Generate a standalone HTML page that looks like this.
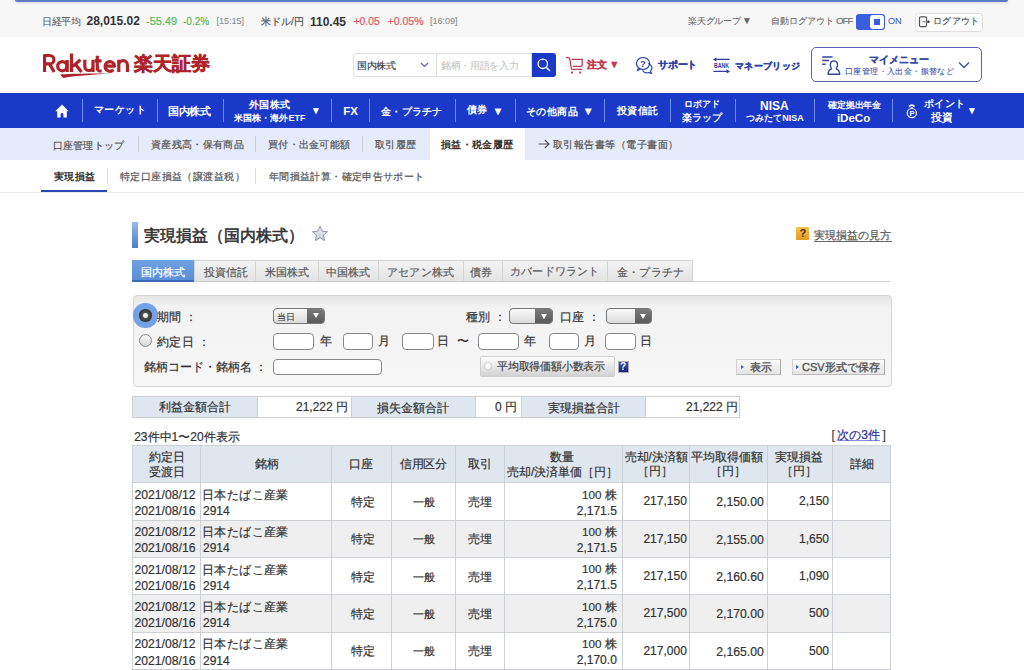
<!DOCTYPE html>
<html><head><meta charset="utf-8">
<style>
*{box-sizing:border-box;margin:0;padding:0}
html,body{width:1024px;height:670px;overflow:hidden;background:#fff}
body{font-family:"Liberation Sans",sans-serif;color:#333;position:relative}
.a{position:absolute;white-space:nowrap}
.a[id]{-webkit-text-stroke:0.2px currentColor}

</style></head><body>
<div class="raw">
<!-- ticker bar -->
<div class="a" style="left:0;top:0;width:1024px;height:37px;background:#f7f7f8"></div>
<div class="a" style="left:15px;top:0;width:993px;height:2px;background:#5b7bc2;border-radius:0 0 3px 3px;box-shadow:0 1px 3px rgba(0,0,0,.15)"></div>
<div class="a" style="left:856px;top:13.5px;width:29px;height:16px;background:#3a5ee0;border-radius:3px"></div>
<div class="a" style="left:870px;top:14.5px;width:14px;height:14px;background:#fff;border-radius:3px"></div>
<div class="a" style="left:874px;top:19px;width:6px;height:6px;background:#3a5ee0"></div>
<div class="a" style="left:915px;top:12.5px;width:67.5px;height:19px;background:#fdfdfd;border:1px solid #dedede;border-radius:3.5px"></div>
<svg class="a" style="left:912px;top:10px" width="28" height="24" viewBox="0 0 28 24"><rect x="7.5" y="6.8" width="7" height="9.8" rx="1" fill="none" stroke="#555" stroke-width="1.2"/><path d="M10.4 11.7H16" stroke="#999" stroke-width="1.1"/><circle cx="16.4" cy="11.7" r="1.25" fill="#333"/></svg>

<!-- header -->
<svg class="a" style="left:43px;top:53px" width="90" height="28" viewBox="0 0 90 28">
<g fill="none" stroke="#ae2329" stroke-width="3.2" stroke-linecap="butt" stroke-linejoin="round">
<path d="M1.5 19V2.5h5.2a4.2 4.2 0 0 1 0 8.4H1.5M6.5 10.9L11.2 19"/>
<circle cx="19.3" cy="13.2" r="4.6"/><path d="M24.2 7v12"/>
<path d="M28.5 0.5V19M37.4 6.8l-7.6 6.6M32.6 11.6L38.5 19"/>
<path d="M41.8 6.8v6.6a4.1 4.1 0 0 0 8.2 0V6.8M50 10v9"/>
<path d="M54.3 2.8v12.6a2.6 2.6 0 0 0 2.6 2.6h1.8M51.6 7.9h7"/>
<path d="M62.2 13.2H71.4A4.6 4.6 0 0 0 62.2 13.2A4.6 4.6 0 0 0 70.3 16.6"/>
<path d="M75.8 6.8V19M75.8 12a4.3 4.3 0 0 1 8.6 0v7"/>
</g>
<path d="M17.5 21.2C30 20.6 50 20.2 68.5 20.5C52 21.4 34 22.6 20.5 24.9C19 24 17.8 22.5 17.5 21.2z" fill="#ae2329"/>
</svg>
<div class="a" style="left:353px;top:53px;width:84px;height:24px;border:1px solid #ddd;border-radius:3px 0 0 3px;background:#fff"></div>
<svg class="a" style="left:420px;top:62px" width="9" height="6" viewBox="0 0 9 6"><path d="M1 1l3.5 3.5L8 1" fill="none" stroke="#5566aa" stroke-width="1.2"/></svg>
<div class="a" style="left:437px;top:53px;width:95px;height:24px;border:1px solid #ddd;border-left:none;background:#fff"></div>
<div class="a" style="left:532px;top:53px;width:24px;height:24px;background:#1a39c8;border-radius:0 3px 3px 0"></div>
<svg class="a" style="left:536px;top:57px" width="16" height="16" viewBox="0 0 16 16"><circle cx="6.8" cy="6.8" r="4.7" fill="none" stroke="#fff" stroke-width="1.3"/><path d="M10.3 10.3l3.6 3.6" stroke="#fff" stroke-width="1.4"/></svg>
<svg class="a" style="left:562px;top:52px" width="28" height="26" viewBox="0 0 28 26"><path d="M4.4 5.4C6.5 5.4 7.6 5.8 7.9 7.5L9.3 16.3C9.4 17 9.8 17.4 10.5 17.4H19.8M10.2 7.4H20.2V13C20.2 13.9 19.7 14.3 18.8 14.3H11.2" fill="none" stroke="#bb3d5c" stroke-width="1.35" stroke-linecap="round"/><rect x="9" y="19.5" width="2" height="2" rx="0.5" fill="#bb3d5c"/><rect x="17.2" y="19.5" width="2" height="2" rx="0.5" fill="#bb3d5c"/></svg>
<svg class="a" style="left:635px;top:56px" width="19" height="18" viewBox="0 0 19 18"><path d="M8 1.5a6.5 6 0 1 0 0.1 0zM3.5 11.5l-1 3 3.5-1.5" fill="#fff" stroke="#2d44a8" stroke-width="1.2"/><path d="M13 7.5a5 4.5 0 0 1 2.5 7.5l1 2.5-3-1a5 4.5 0 0 1-6-2" fill="none" stroke="#2d44a8" stroke-width="1.2"/><text x="8" y="10.8" font-size="9.5" font-weight="bold" text-anchor="middle" fill="#2d44a8" font-family="Liberation Sans">?</text></svg>
<svg class="a" style="left:712px;top:56px" width="19" height="19" viewBox="0 0 19 19"><path d="M3 3.4H17.7M1.4 15.4H16" fill="none" stroke="#2d3d9c" stroke-width="1.3"/><path d="M1 3.4L4.4 1.2V5.6z M18 15.4L14.6 13.2V17.6z" fill="#2d3d9c"/><text x="2" y="11.8" font-size="6.4" font-weight="bold" textLength="15" lengthAdjust="spacingAndGlyphs" fill="#2d3d9c" font-family="Liberation Sans">BANK</text></svg>
<div class="a" style="left:811px;top:47px;width:171px;height:35px;border:1.3px solid #5563b5;border-radius:5px;background:#fff"></div>
<svg class="a" style="left:816px;top:50px" width="30" height="30" viewBox="0 0 30 30"><path d="M6.2 6.9H16.6M6.2 10.5H13M6.2 14.3H9.6" stroke="#35449e" stroke-width="1.5"/><path d="M15.6 18.8C13.1 15.4 14.2 10.9 17.9 10.9C21.6 10.9 22.7 15.4 20.2 18.8C22.6 19.5 23.7 21.6 23.7 24.3H12.1C12.1 21.6 13.2 19.5 15.6 18.8Z" fill="none" stroke="#35449e" stroke-width="1.4" stroke-linejoin="round"/></svg>
<svg class="a" style="left:958px;top:61px" width="12" height="8" viewBox="0 0 12 8"><path d="M1 1.5l5 5 5-5" fill="none" stroke="#3a4ba8" stroke-width="1.3"/></svg>

<!-- nav -->
<div class="a" style="left:0;top:93px;width:1024px;height:35px;background:#1a39c8"></div>
<svg class="a" style="left:55px;top:104px" width="14" height="14" viewBox="0 0 14 14"><path d="M7 0.6L0.3 7.2h1.9v6.4h3.4V10.4a1.4 1.4 0 0 1 2.8 0v3.2h3.4V7.2h1.9z" fill="#fff"/></svg>
<div class="a" style="left:82px;top:99px;width:1px;height:23px;background:#6f8cf0"></div>
<div class="a" style="left:157px;top:99px;width:1px;height:23px;background:#6f8cf0"></div>
<div class="a" style="left:223px;top:99px;width:1px;height:23px;background:#6f8cf0"></div>
<div class="a" style="left:331px;top:99px;width:1px;height:23px;background:#6f8cf0"></div>
<div class="a" style="left:369px;top:99px;width:1px;height:23px;background:#6f8cf0"></div>
<div class="a" style="left:455px;top:99px;width:1px;height:23px;background:#6f8cf0"></div>
<div class="a" style="left:515px;top:99px;width:1px;height:23px;background:#6f8cf0"></div>
<div class="a" style="left:604px;top:99px;width:1px;height:23px;background:#6f8cf0"></div>
<div class="a" style="left:670px;top:99px;width:1px;height:23px;background:#6f8cf0"></div>
<div class="a" style="left:735px;top:99px;width:1px;height:23px;background:#6f8cf0"></div>
<div class="a" style="left:814px;top:99px;width:1px;height:23px;background:#6f8cf0"></div>
<div class="a" style="left:892px;top:99px;width:1px;height:23px;background:#6f8cf0"></div>
<svg class="a" style="left:905px;top:103px" width="14" height="17" viewBox="0 0 14 17"><path d="M4 3.6Q6.8 0.8 9.6 3.6" fill="none" stroke="#fff" stroke-width="1.7"/><path d="M5.6 4.6h2.4" stroke="#fff" stroke-width="0.8"/><circle cx="6.8" cy="10.1" r="4.6" fill="none" stroke="#fff" stroke-width="1.2"/><text x="6.9" y="12.9" font-size="7.5" font-weight="bold" text-anchor="middle" fill="#fff" font-family="Liberation Sans">P</text></svg>

<!-- subnav -->
<div class="a" style="left:0;top:128px;width:1024px;height:32px;background:#e6ebfb"></div>
<div class="a" style="left:430px;top:128px;width:95px;height:32px;background:#fff"></div>
<svg class="a" style="left:538px;top:139px" width="12" height="10" viewBox="0 0 12 10"><path d="M0.5 5H11M6.8 1l4.2 4-4.2 4" fill="none" stroke="#555" stroke-width="1.1"/></svg>
<div class="a" style="left:138px;top:136px;width:1px;height:16px;background:#ccc"></div>
<div class="a" style="left:255px;top:136px;width:1px;height:16px;background:#ccc"></div>
<div class="a" style="left:362px;top:136px;width:1px;height:16px;background:#ccc"></div>
<div class="a" style="left:41px;top:189.5px;width:66px;height:2.5px;background:#2b47b5"></div>
<div class="a" style="left:107px;top:168px;width:1px;height:16px;background:#ddd"></div>
<div class="a" style="left:255px;top:168px;width:1px;height:16px;background:#ddd"></div>
<div class="a" style="left:0;top:192px;width:1024px;height:1px;background:#ececec"></div>

<!-- title -->
<div class="a" style="left:132px;top:222px;width:5.5px;height:26px;background:linear-gradient(#9db9e8,#4c7dc9)"></div>
<svg class="a" style="left:310.5px;top:225px" width="18" height="18" viewBox="0 0 17 17"><defs><linearGradient id="sg" x1="0" y1="0" x2="0" y2="1"><stop offset="0" stop-color="#e8ecf3"/><stop offset="1" stop-color="#c8d2e0"/></linearGradient></defs><path d="M8.5 1.2l2.1 4.6 5 .5-3.8 3.4 1.1 4.9-4.4-2.6-4.4 2.6 1.1-4.9L1.4 6.3l5-.5z" fill="url(#sg)" stroke="#9aa0a8" stroke-width="1" stroke-linejoin="round"/></svg>
<div class="a" style="left:796px;top:227px;width:13px;height:13px;background:linear-gradient(#f6c34a,#e59a1e);border-radius:1px"></div>
<div class="a" style="left:799.5px;top:227px;font-size:11px;line-height:13px;color:#333;font-weight:bold">?</div>
<div class="a" style="left:814px;top:240.5px;width:77.5px;height:1px;background:#666"></div>

<!-- tabs -->
<div class="a" style="left:132px;top:281px;width:758px;height:1px;background:#ccc"></div>
<div class="a" style="left:132px;top:260px;width:561px;height:21px;background:linear-gradient(#f3f3f3,#e3e3e3);border:1px solid #d2d2d2;border-bottom:none"></div>
<div class="a" style="left:194px;top:260px;width:1px;height:21px;background:#d2d2d2"></div>
<div class="a" style="left:255px;top:260px;width:1px;height:21px;background:#d2d2d2"></div>
<div class="a" style="left:318px;top:260px;width:1px;height:21px;background:#d2d2d2"></div>
<div class="a" style="left:378px;top:260px;width:1px;height:21px;background:#d2d2d2"></div>
<div class="a" style="left:463px;top:260px;width:1px;height:21px;background:#d2d2d2"></div>
<div class="a" style="left:502px;top:260px;width:1px;height:21px;background:#d2d2d2"></div>
<div class="a" style="left:607px;top:260px;width:1px;height:21px;background:#d2d2d2"></div>
<div class="a" style="left:132px;top:260px;width:62px;height:22px;background:linear-gradient(#6fa0e0,#5a8fd8);border-bottom:2px solid #3a6bbd"></div>

<!-- panel -->
<div class="a" style="left:132.5px;top:294.5px;width:759px;height:92px;border:1px solid #d6d6d6;border-radius:4px;background:linear-gradient(#e6e6e6 0px,#f3f3f3 11px,#f6f6f6 100%)"></div>
<div class="a" style="left:133px;top:303px;width:24.5px;height:24.5px;border-radius:50%;background:#72a1e8"></div>
<div class="a" style="left:139.2px;top:309px;width:12.5px;height:12.5px;border-radius:50%;background:radial-gradient(circle at 50% 50%,#fff 0,#eee 2px,#555 3px,#333 6px)"></div>
<div class="a" style="left:139px;top:334.3px;width:13px;height:13px;border-radius:50%;border:1px solid #888;background:linear-gradient(#fdfdfd,#d5d5d5)"></div>

<div class="a" style="left:272.5px;top:307.8px;width:52px;height:16px;border:1px solid #777;border-radius:4px;background:linear-gradient(#fafafa,#dadada);overflow:hidden"><div style="position:absolute;right:0;top:0;width:16.5px;height:100%;background:linear-gradient(#7a7a7a,#5a5a5a)"></div></div>
<div class="a" style="left:313px;top:313.3px;width:0;height:0;border-left:3px solid transparent;border-right:3px solid transparent;border-top:5.5px solid #fff"></div>
<div class="a" style="left:509.3px;top:308.3px;width:43.5px;height:16px;border:1px solid #777;border-radius:4px;background:linear-gradient(#fafafa,#dadada);overflow:hidden"><div style="position:absolute;right:0;top:0;width:16.5px;height:100%;background:linear-gradient(#7a7a7a,#5a5a5a)"></div></div>
<div class="a" style="left:541px;top:313.8px;width:0;height:0;border-left:3px solid transparent;border-right:3px solid transparent;border-top:5.5px solid #fff"></div>
<div class="a" style="left:605.6px;top:308.3px;width:46.5px;height:16px;border:1px solid #777;border-radius:4px;background:linear-gradient(#fafafa,#dadada);overflow:hidden"><div style="position:absolute;right:0;top:0;width:16.5px;height:100%;background:linear-gradient(#7a7a7a,#5a5a5a)"></div></div>
<div class="a" style="left:640px;top:313.8px;width:0;height:0;border-left:3px solid transparent;border-right:3px solid transparent;border-top:5.5px solid #fff"></div>

<div class="a" style="left:272.8px;top:332.5px;width:41px;height:17.5px;border:1px solid #888;border-radius:4px;background:#fff"></div>
<div class="a" style="left:342.7px;top:332.5px;width:30.5px;height:17.5px;border:1px solid #888;border-radius:4px;background:#fff"></div>
<div class="a" style="left:402.4px;top:332.5px;width:31.6px;height:17.5px;border:1px solid #888;border-radius:4px;background:#fff"></div>
<div class="a" style="left:477.8px;top:332.5px;width:41.5px;height:17.5px;border:1px solid #888;border-radius:4px;background:#fff"></div>
<div class="a" style="left:548.5px;top:332.5px;width:30.5px;height:17.5px;border:1px solid #888;border-radius:4px;background:#fff"></div>
<div class="a" style="left:605px;top:332.5px;width:30.5px;height:17.5px;border:1px solid #888;border-radius:4px;background:#fff"></div>
<div class="a" style="left:272.8px;top:358.5px;width:109.7px;height:16.5px;border:1px solid #888;border-radius:4px;background:#fff"></div>

<div class="a" style="left:479.5px;top:356.2px;width:135px;height:20.4px;border:1px solid #cfcfcf;border-radius:2px;background:linear-gradient(#fdfdfd,#d2d2d2)"></div>
<div class="a" style="left:484px;top:362.4px;width:8px;height:8px;border-radius:50%;background:#fff;border:1px solid #ccc"></div>
<div class="a" style="left:617.8px;top:361px;width:11px;height:11.7px;background:linear-gradient(#3b4fb0,#16237a);border:1px solid #aab"></div>
<div class="a" style="left:620px;top:360.5px;font-size:10px;line-height:12px;color:#fff;font-weight:bold">?</div>

<div class="a" style="left:736.3px;top:359px;width:44.5px;height:16.4px;border:1px solid #d0d0d0;border-right-color:#aaa;border-bottom-color:#bbb;background:linear-gradient(#fcfcfc,#e4e4e4)"></div>
<div class="a" style="left:741px;top:364.8px;width:0;height:0;border-top:2.2px solid transparent;border-bottom:2.2px solid transparent;border-left:3px solid #3a62b8"></div>
<div class="a" style="left:791.7px;top:359px;width:93.8px;height:16.4px;border:1px solid #d0d0d0;border-right-color:#aaa;border-bottom-color:#bbb;background:linear-gradient(#fcfcfc,#e4e4e4)"></div>
<div class="a" style="left:796.4px;top:364.8px;width:0;height:0;border-top:2.2px solid transparent;border-bottom:2.2px solid transparent;border-left:3px solid #3a62b8"></div>

<!-- summary table -->
<div class="a" style="left:132px;top:396px;width:608px;height:22px;border:1px solid #cfcfcf;background:#fff"></div>
<div class="a" style="left:132px;top:396px;width:126px;height:22px;background:#dee6ef;border:1px solid #cfcfcf"></div>
<div class="a" style="left:351px;top:396px;width:125px;height:22px;background:#dee6ef;border:1px solid #cfcfcf"></div>
<div class="a" style="left:521px;top:396px;width:125px;height:22px;background:#dee6ef;border:1px solid #cfcfcf"></div>

<!-- main table -->
<div class="a" style="left:132px;top:445px;width:759px;height:38px;background:#e0e6ee"></div>
<div class="a" style="left:132px;top:520px;width:759px;height:37px;background:#efefef"></div>
<div class="a" style="left:132px;top:594px;width:759px;height:38px;background:#efefef"></div>
<div class="a" style="left:132px;top:445px;width:759px;height:1px;background:#cdd1d6"></div>
<div class="a" style="left:132px;top:482px;width:759px;height:1px;background:#cdd1d6"></div>
<div class="a" style="left:132px;top:520px;width:759px;height:1px;background:#cdd1d6"></div>
<div class="a" style="left:132px;top:557px;width:759px;height:1px;background:#cdd1d6"></div>
<div class="a" style="left:132px;top:594px;width:759px;height:1px;background:#cdd1d6"></div>
<div class="a" style="left:132px;top:632px;width:759px;height:1px;background:#cdd1d6"></div>
<div class="a" style="left:132px;top:669px;width:759px;height:1px;background:#cdd1d6"></div>
<div class="a" style="left:132px;top:445px;width:1px;height:225px;background:#cdd1d6"></div>
<div class="a" style="left:200px;top:445px;width:1px;height:225px;background:#cdd1d6"></div>
<div class="a" style="left:331px;top:445px;width:1px;height:225px;background:#cdd1d6"></div>
<div class="a" style="left:390.5px;top:445px;width:1px;height:225px;background:#cdd1d6"></div>
<div class="a" style="left:455px;top:445px;width:1px;height:225px;background:#cdd1d6"></div>
<div class="a" style="left:504px;top:445px;width:1px;height:225px;background:#cdd1d6"></div>
<div class="a" style="left:621.5px;top:445px;width:1px;height:225px;background:#cdd1d6"></div>
<div class="a" style="left:689px;top:445px;width:1px;height:225px;background:#cdd1d6"></div>
<div class="a" style="left:767px;top:445px;width:1px;height:225px;background:#cdd1d6"></div>
<div class="a" style="left:831.5px;top:445px;width:1px;height:225px;background:#cdd1d6"></div>
<div class="a" style="left:890px;top:445px;width:1px;height:225px;background:#cdd1d6"></div>

</div>
<div id="nk_l" class="a" style="left:41.80px;top:14.50px;font-size:10.00px;line-height:14px;color:#555;transform:scale(0.9580);transform-origin:0 0;-webkit-text-stroke:0.08px currentColor">日経平均</div>
<div id="nk_v" class="a" style="left:86.50px;top:13.50px;font-size:12.00px;line-height:14px;color:#333;font-weight:bold;-webkit-text-stroke:0">28,015.02</div>
<div id="nk_c1" class="a" style="left:146.00px;top:14.00px;font-size:11.00px;line-height:14px;color:#5cb85c">-55.49</div>
<div id="nk_c2" class="a" style="left:183.00px;top:15.00px;font-size:10.05px;line-height:14px;color:#5cb85c">-0.2%</div>
<div id="nk_t" class="a" style="left:216.50px;top:13.50px;font-size:9.03px;line-height:14px;color:#888;-webkit-text-stroke:0.08px currentColor">[15:15]</div>
<div id="us_l" class="a" style="left:261.00px;top:14.50px;font-size:10.00px;line-height:14px;color:#555">米ドル/円</div>
<div id="us_v" class="a" style="left:310.00px;top:14.50px;font-size:12.00px;line-height:14px;color:#333;font-weight:bold;-webkit-text-stroke:0">110.45</div>
<div id="us_c1" class="a" style="left:353.50px;top:15.00px;font-size:10.41px;line-height:14px;color:#e05a5f">+0.05</div>
<div id="us_c2" class="a" style="left:387.50px;top:14.00px;font-size:10.55px;line-height:14px;color:#e05a5f">+0.05%</div>
<div id="us_t" class="a" style="left:430.00px;top:13.50px;font-size:9.02px;line-height:14px;color:#888;-webkit-text-stroke:0.08px currentColor">[16:09]</div>
<div id="grp" class="a" style="left:688.00px;top:14.00px;font-size:9.00px;line-height:14px;color:#666;transform:scale(0.9756);transform-origin:0 0;-webkit-text-stroke:0.08px currentColor">楽天グループ</div>
<div id="grp_a" class="a" style="left:742.00px;top:14.00px;font-size:10.00px;line-height:14px;color:#666;transform:scale(0.9900);transform-origin:0 0;-webkit-text-stroke:0.08px currentColor">▼</div>
<div id="alo" class="a" style="left:770.50px;top:13.50px;font-size:9.00px;line-height:14px;color:#666;-webkit-text-stroke:0.08px currentColor">自動ログアウト</div>
<div id="alo2" class="a" style="left:836.00px;top:14.00px;font-size:9.60px;line-height:14px;color:#666;-webkit-text-stroke:0.08px currentColor;letter-spacing:-0.90px">OFF</div>
<div id="on" class="a" style="left:888.00px;top:14.00px;font-size:9.14px;line-height:14px;color:#3f5fb8;-webkit-text-stroke:0.08px currentColor">ON</div>
<div id="lo" class="a" style="left:932.50px;top:13.50px;font-size:9.00px;line-height:14px;color:#444;transform:scale(1.0378);transform-origin:0 0;-webkit-text-stroke:0.08px currentColor">ログアウト</div>
<div id="logo_ja" class="a" style="left:134.00px;top:52.10px;font-size:19.00px;line-height:24px;color:#ae2329;font-weight:900;-webkit-text-stroke:0;-webkit-text-stroke:0.6px #ae2329">楽天証券</div>
<div id="sel" class="a" style="left:357.00px;top:58.50px;font-size:10.00px;line-height:14px;color:#333;transform:scale(0.9680);transform-origin:0 0;-webkit-text-stroke:0.08px currentColor">国内株式</div>
<div id="inp" class="a" style="left:441.00px;top:58.50px;font-size:10.00px;line-height:14px;color:#c4c4c4;transform:scale(0.9670);transform-origin:0 0;-webkit-text-stroke:0.08px currentColor">銘柄・用語を入力</div>
<div id="ord" class="a" style="left:587.00px;top:57.50px;font-size:10.00px;line-height:14px;color:#c8364f;transform:scale(0.9790);transform-origin:0 0;font-weight:bold;-webkit-text-stroke:0;-webkit-text-stroke:0.3px currentColor">注文</div>
<div id="ord_a" class="a" style="left:609.00px;top:56.50px;font-size:11.00px;line-height:14px;color:#c8364f;transform:scale(0.9682);transform-origin:0 0">▼</div>
<div id="sup" class="a" style="left:657.50px;top:57.50px;font-size:10.00px;line-height:14px;color:#2d44a8;transform:scale(0.9810);transform-origin:0 0;font-weight:bold;-webkit-text-stroke:0;-webkit-text-stroke:0.3px currentColor">サポート</div>
<div id="mb" class="a" style="left:735.00px;top:58.50px;font-size:9.00px;line-height:14px;color:#2d44a8;transform:scale(1.0411);transform-origin:0 0;font-weight:bold;-webkit-text-stroke:0;-webkit-text-stroke:0.3px currentColor">マネーブリッジ</div>
<div id="mm" class="a" style="left:869.00px;top:53.40px;font-size:10.00px;line-height:14px;color:#3a4ba8;transform:scale(0.9950);transform-origin:0 0;font-weight:bold;-webkit-text-stroke:0;-webkit-text-stroke:0.3px currentColor">マイメニュー</div>
<div id="mm2" class="a" style="left:845.00px;top:64.50px;font-size:8.00px;line-height:14px;color:#3a4ba8;transform:scale(1.0488);transform-origin:0 0;-webkit-text-stroke:0.08px currentColor">口座管理・入出金・振替など</div>
<div id="n_mk" class="a" style="left:94.10px;top:103.10px;font-size:10.00px;line-height:14px;color:#fff;transform:scale(1.0400);transform-origin:0 0;font-weight:bold;-webkit-text-stroke:0">マーケット</div>
<div id="n_dom" class="a" style="left:168.00px;top:103.60px;font-size:11.00px;line-height:14px;color:#fff;transform:scale(0.9682);transform-origin:0 0;font-weight:bold;-webkit-text-stroke:0">国内株式</div>
<div id="n_for1" class="a" style="left:249.20px;top:97.70px;font-size:10.00px;line-height:14px;color:#fff;transform:scale(1.0400);transform-origin:0 0;font-weight:bold;-webkit-text-stroke:0">外国株式</div>
<div id="n_for2" class="a" style="left:234.40px;top:111.00px;font-size:9.00px;line-height:14px;color:#fff;font-weight:bold;-webkit-text-stroke:0">米国株・海外ETF</div>
<div id="n_for_a" class="a" style="left:311.00px;top:103.60px;font-size:10.00px;line-height:14px;color:#fff;transform:scale(0.9900);transform-origin:0 0;-webkit-text-stroke:0.08px currentColor">▼</div>
<div id="n_fx" class="a" style="left:343.20px;top:104.10px;font-size:11.57px;line-height:14px;color:#fff;font-weight:bold;-webkit-text-stroke:0">FX</div>
<div id="n_gold" class="a" style="left:381.40px;top:105.10px;font-size:10.00px;line-height:14px;color:#fff;transform:scale(1.0270);transform-origin:0 0;font-weight:bold;-webkit-text-stroke:0">金・プラチナ</div>
<div id="n_bond" class="a" style="left:467.00px;top:103.10px;font-size:10.00px;line-height:14px;color:#fff;transform:scale(1.0130);transform-origin:0 0;font-weight:bold;-webkit-text-stroke:0">債券</div>
<div id="n_bond_a" class="a" style="left:492.40px;top:103.60px;font-size:11.00px;line-height:14px;color:#fff">▼</div>
<div id="n_oth" class="a" style="left:526.00px;top:104.60px;font-size:10.00px;line-height:14px;color:#fff;transform:scale(1.0400);transform-origin:0 0;font-weight:bold;-webkit-text-stroke:0">その他商品</div>
<div id="n_oth_a" class="a" style="left:582.80px;top:103.60px;font-size:11.00px;line-height:14px;color:#fff">▼</div>
<div id="n_fund" class="a" style="left:616.50px;top:104.10px;font-size:10.00px;line-height:14px;color:#fff;transform:scale(1.0400);transform-origin:0 0;font-weight:bold;-webkit-text-stroke:0">投資信託</div>
<div id="n_robo1" class="a" style="left:683.80px;top:96.70px;font-size:9.00px;line-height:14px;color:#fff;font-weight:bold;-webkit-text-stroke:0">ロボアド</div>
<div id="n_robo2" class="a" style="left:681.60px;top:110.50px;font-size:10.00px;line-height:14px;color:#fff;transform:scale(1.0130);transform-origin:0 0;font-weight:bold;-webkit-text-stroke:0">楽ラップ</div>
<div id="n_nisa1" class="a" style="left:760.00px;top:98.60px;font-size:12.00px;line-height:14px;color:#fff;font-weight:bold;-webkit-text-stroke:0">NISA</div>
<div id="n_nisa2" class="a" style="left:746.20px;top:110.80px;font-size:9.00px;line-height:14px;color:#fff;font-weight:bold;-webkit-text-stroke:0">つみたてNISA</div>
<div id="n_idc1" class="a" style="left:827.60px;top:97.70px;font-size:9.00px;line-height:14px;color:#fff;transform:scale(0.9822);transform-origin:0 0;font-weight:bold;-webkit-text-stroke:0">確定拠出年金</div>
<div id="n_idc2" class="a" style="left:836.90px;top:110.80px;font-size:11.54px;line-height:14px;color:#fff;font-weight:bold;-webkit-text-stroke:0">iDeCo</div>
<div id="n_pt1" class="a" style="left:924.00px;top:97.20px;font-size:10.00px;line-height:14px;color:#fff;transform:scale(1.0400);transform-origin:0 0;font-weight:bold;-webkit-text-stroke:0">ポイント</div>
<div id="n_pt2" class="a" style="left:931.00px;top:110.00px;font-size:10.00px;line-height:14px;color:#fff;transform:scale(1.0500);transform-origin:0 0;font-weight:bold;-webkit-text-stroke:0">投資</div>
<div id="n_pt_a" class="a" style="left:967.00px;top:103.60px;font-size:10.00px;line-height:14px;color:#fff;transform:scale(0.9900);transform-origin:0 0;-webkit-text-stroke:0.08px currentColor">▼</div>
<div id="s_top" class="a" style="left:53.00px;top:139.00px;font-size:10.00px;line-height:14px;color:#555;transform:scale(1.0130);transform-origin:0 0">口座管理トップ</div>
<div id="s_bal" class="a" style="left:150.80px;top:138.00px;font-size:10.00px;line-height:14px;color:#555;transform:scale(1.0330);transform-origin:0 0">資産残高・保有商品</div>
<div id="s_buy" class="a" style="left:268.40px;top:138.00px;font-size:10.00px;line-height:14px;color:#555;transform:scale(1.0270);transform-origin:0 0">買付・出金可能額</div>
<div id="s_his" class="a" style="left:375.00px;top:137.50px;font-size:10.00px;line-height:14px;color:#555;transform:scale(1.0400);transform-origin:0 0">取引履歴</div>
<div id="s_pl" class="a" style="left:441.00px;top:138.00px;font-size:10.00px;line-height:14px;color:#333;transform:scale(1.0300);transform-origin:0 0;font-weight:bold;-webkit-text-stroke:0">損益・税金履歴</div>
<div id="s_rep" class="a" style="left:552.50px;top:137.50px;font-size:10.00px;line-height:14px;color:#555;transform:scale(1.0490);transform-origin:0 0">取引報告書等（電子書面）</div>
<div id="ss_real" class="a" style="left:54.00px;top:170.30px;font-size:10.00px;line-height:14px;color:#333;transform:scale(1.0300);transform-origin:0 0;font-weight:bold;-webkit-text-stroke:0">実現損益</div>
<div id="ss_tok" class="a" style="left:120.10px;top:170.30px;font-size:10.00px;line-height:14px;color:#555;transform:scale(1.0410);transform-origin:0 0">特定口座損益（譲渡益税）</div>
<div id="ss_year" class="a" style="left:269.00px;top:169.80px;font-size:10.00px;line-height:14px;color:#555;transform:scale(1.0370);transform-origin:0 0">年間損益計算・確定申告サポート</div>
<div id="title" class="a" style="left:143.80px;top:227.30px;font-size:16.00px;line-height:18px;color:#333;-webkit-text-stroke:0.55px #333">実現損益（国内株式）</div>
<div id="help" class="a" style="left:813.70px;top:228.00px;font-size:11.00px;line-height:14px;color:#555">実現損益の見方</div>
<div id="tab1" class="a" style="left:140.50px;top:265.00px;font-size:11.00px;line-height:14px;color:#fff">国内株式</div>
<div id="tab2" class="a" style="left:203.60px;top:264.50px;font-size:11.00px;line-height:14px;color:#5a5a5a">投資信託</div>
<div id="tab3" class="a" style="left:264.50px;top:264.50px;font-size:11.00px;line-height:14px;color:#5a5a5a">米国株式</div>
<div id="tab4" class="a" style="left:326.00px;top:264.50px;font-size:11.00px;line-height:14px;color:#5a5a5a">中国株式</div>
<div id="tab5" class="a" style="left:386.80px;top:264.50px;font-size:11.00px;line-height:14px;color:#5a5a5a;transform:scale(1.0182);transform-origin:0 0">アセアン株式</div>
<div id="tab6" class="a" style="left:470.40px;top:265.00px;font-size:11.00px;line-height:14px;color:#5a5a5a;transform:scale(1.0182);transform-origin:0 0">債券</div>
<div id="tab7" class="a" style="left:510.00px;top:264.00px;font-size:11.00px;line-height:14px;color:#5a5a5a;transform:scale(1.0182);transform-origin:0 0">カバードワラント</div>
<div id="tab8" class="a" style="left:617.00px;top:265.00px;font-size:11.00px;line-height:14px;color:#5a5a5a;transform:scale(1.0182);transform-origin:0 0">金・プラチナ</div>
<div id="p_kikan" class="a" style="left:157.00px;top:309.60px;font-size:12.00px;line-height:14px;color:#333;transform:scale(1.0333);transform-origin:0 0">期間 ：</div>
<div id="p_yaku" class="a" style="left:157.00px;top:334.70px;font-size:12.00px;line-height:14px;color:#333;transform:scale(1.0333);transform-origin:0 0">約定日 ：</div>
<div id="p_name" class="a" style="left:143.90px;top:360.10px;font-size:12.00px;line-height:14px;color:#333">銘柄コード・銘柄名 ：</div>
<div id="p_today" class="a" style="left:277.00px;top:309.60px;font-size:8.00px;line-height:14px;color:#333;transform:scale(1.0625);transform-origin:0 0;-webkit-text-stroke:0.08px currentColor">当日</div>
<div id="p_shu" class="a" style="left:465.50px;top:309.60px;font-size:12.00px;line-height:14px;color:#333;transform:scale(1.0333);transform-origin:0 0">種別 ：</div>
<div id="p_kou" class="a" style="left:560.40px;top:309.60px;font-size:12.00px;line-height:14px;color:#333;transform:scale(1.0333);transform-origin:0 0">口座 ：</div>
<div id="p_d0" class="a" style="left:319.60px;top:333.50px;font-size:12.00px;line-height:14px;color:#333">年</div>
<div id="p_d1" class="a" style="left:378.00px;top:333.50px;font-size:12.00px;line-height:14px;color:#333">月</div>
<div id="p_d2" class="a" style="left:437.40px;top:333.50px;font-size:12.00px;line-height:14px;color:#333">日</div>
<div id="p_d3" class="a" style="left:457.00px;top:334.00px;font-size:12.00px;line-height:14px;color:#333">〜</div>
<div id="p_d4" class="a" style="left:524.00px;top:333.50px;font-size:12.00px;line-height:14px;color:#333">年</div>
<div id="p_d5" class="a" style="left:584.00px;top:333.50px;font-size:12.00px;line-height:14px;color:#333">月</div>
<div id="p_d6" class="a" style="left:640.00px;top:333.50px;font-size:12.00px;line-height:14px;color:#333">日</div>
<div id="p_avg" class="a" style="left:497.10px;top:359.20px;font-size:11.00px;line-height:14px;color:#444;transform:scale(0.9818);transform-origin:0 0">平均取得価額小数表示</div>
<div id="p_show" class="a" style="left:749.50px;top:360.30px;font-size:11.00px;line-height:14px;color:#555;-webkit-text-stroke:0.35px #555">表示</div>
<div id="p_csv" class="a" style="left:802.10px;top:360.30px;font-size:11.00px;line-height:14px;color:#555;letter-spacing:-0.03px;-webkit-text-stroke:0.35px #555">CSV形式で保存</div>
<div id="sm1" class="a" style="left:159.00px;top:400.10px;font-size:12.00px;line-height:14px;color:#333">利益金額合計</div>
<div id="sm2" class="a" style="left:296.00px;top:400.10px;font-size:12.00px;line-height:14px;color:#333">21,222 円</div>
<div id="sm3" class="a" style="left:377.40px;top:400.60px;font-size:12.00px;line-height:14px;color:#333">損失金額合計</div>
<div id="sm4" class="a" style="left:495.00px;top:400.10px;font-size:12.00px;line-height:14px;color:#333">0 円</div>
<div id="sm5" class="a" style="left:548.00px;top:400.60px;font-size:12.00px;line-height:14px;color:#333">実現損益合計</div>
<div id="sm6" class="a" style="left:686.00px;top:400.10px;font-size:12.00px;line-height:14px;color:#333">21,222 円</div>
<div id="cnt" class="a" style="left:134.20px;top:429.70px;font-size:12.00px;line-height:14px;color:#333">23件中1〜20件表示</div>
<div id="next" class="a" style="left:831.50px;top:427.50px;font-size:12.00px;line-height:14px;color:#444">[<span style="color:#2c3190;text-decoration:underline;text-decoration-color:#8a8fd8;margin:0 2.5px 0 2.5px">次の3件</span>]</div>
<div id="h1a" class="a" style="left:148.80px;top:449.80px;font-size:12.00px;line-height:14px;color:#333">約定日</div>
<div id="h1b" class="a" style="left:148.80px;top:465.30px;font-size:12.00px;line-height:14px;color:#333">受渡日</div>
<div id="h2" class="a" style="left:254.50px;top:456.90px;font-size:12.00px;line-height:14px;color:#333">銘柄</div>
<div id="h3" class="a" style="left:349.20px;top:457.40px;font-size:12.00px;line-height:14px;color:#333">口座</div>
<div id="h4" class="a" style="left:400.00px;top:457.40px;font-size:12.00px;line-height:14px;color:#333;transform:scale(0.9750);transform-origin:0 0">信用区分</div>
<div id="h5" class="a" style="left:468.10px;top:457.40px;font-size:12.00px;line-height:14px;color:#333">取引</div>
<div id="h6a" class="a" style="left:550.00px;top:450.00px;font-size:12.00px;line-height:14px;color:#333">数量</div>
<div id="h6b" class="a" style="left:507.00px;top:464.70px;font-size:12.00px;line-height:14px;color:#333">売却/決済単価［円］</div>
<div id="h7a" class="a" style="left:624.60px;top:450.00px;font-size:12.00px;line-height:14px;color:#333">売却/決済額</div>
<div id="h7b" class="a" style="left:637.00px;top:464.30px;font-size:12.00px;line-height:14px;color:#333">［円］</div>
<div id="h8a" class="a" style="left:691.20px;top:450.00px;font-size:12.00px;line-height:14px;color:#333">平均取得価額</div>
<div id="h8b" class="a" style="left:710.00px;top:464.30px;font-size:12.00px;line-height:14px;color:#333">［円］</div>
<div id="h9a" class="a" style="left:775.20px;top:449.50px;font-size:12.00px;line-height:14px;color:#333">実現損益</div>
<div id="h9b" class="a" style="left:781.00px;top:464.30px;font-size:12.00px;line-height:14px;color:#333">［円］</div>
<div id="h10" class="a" style="left:850.20px;top:457.40px;font-size:12.00px;line-height:14px;color:#333">詳細</div>
<div id="r_d1" class="a" style="left:134.50px;top:488.00px;font-size:12.20px;line-height:14px;color:#333">2021/08/12</div>
<div id="r_d1_1" class="a" style="left:134.50px;top:525.35px;font-size:12.20px;line-height:14px;color:#333">2021/08/12</div>
<div id="r_d1_2" class="a" style="left:134.50px;top:562.70px;font-size:12.20px;line-height:14px;color:#333">2021/08/12</div>
<div id="r_d1_3" class="a" style="left:134.50px;top:600.05px;font-size:12.20px;line-height:14px;color:#333">2021/08/12</div>
<div id="r_d1_4" class="a" style="left:134.50px;top:637.40px;font-size:12.20px;line-height:14px;color:#333">2021/08/12</div>
<div id="r_d2" class="a" style="left:134.50px;top:504.10px;font-size:12.20px;line-height:14px;color:#333">2021/08/16</div>
<div id="r_d2_1" class="a" style="left:134.50px;top:541.45px;font-size:12.20px;line-height:14px;color:#333">2021/08/16</div>
<div id="r_d2_2" class="a" style="left:134.50px;top:578.80px;font-size:12.20px;line-height:14px;color:#333">2021/08/16</div>
<div id="r_d2_3" class="a" style="left:134.50px;top:616.15px;font-size:12.20px;line-height:14px;color:#333">2021/08/16</div>
<div id="r_d2_4" class="a" style="left:134.50px;top:653.50px;font-size:12.20px;line-height:14px;color:#333">2021/08/16</div>
<div id="r_n1" class="a" style="left:201.50px;top:488.00px;font-size:12.00px;line-height:14px;color:#333;transform:scale(1.0333);transform-origin:0 0">日本たばこ産業</div>
<div id="r_n1_1" class="a" style="left:201.50px;top:525.35px;font-size:12.00px;line-height:14px;color:#333;transform:scale(1.0333);transform-origin:0 0">日本たばこ産業</div>
<div id="r_n1_2" class="a" style="left:201.50px;top:562.70px;font-size:12.00px;line-height:14px;color:#333;transform:scale(1.0333);transform-origin:0 0">日本たばこ産業</div>
<div id="r_n1_3" class="a" style="left:201.50px;top:600.05px;font-size:12.00px;line-height:14px;color:#333;transform:scale(1.0333);transform-origin:0 0">日本たばこ産業</div>
<div id="r_n1_4" class="a" style="left:201.50px;top:637.40px;font-size:12.00px;line-height:14px;color:#333;transform:scale(1.0333);transform-origin:0 0">日本たばこ産業</div>
<div id="r_n2" class="a" style="left:203.00px;top:504.10px;font-size:12.00px;line-height:14px;color:#333">2914</div>
<div id="r_n2_1" class="a" style="left:203.00px;top:541.45px;font-size:12.00px;line-height:14px;color:#333">2914</div>
<div id="r_n2_2" class="a" style="left:203.00px;top:578.80px;font-size:12.00px;line-height:14px;color:#333">2914</div>
<div id="r_n2_3" class="a" style="left:203.00px;top:616.15px;font-size:12.00px;line-height:14px;color:#333">2914</div>
<div id="r_n2_4" class="a" style="left:203.00px;top:653.50px;font-size:12.00px;line-height:14px;color:#333">2914</div>
<div id="r_k" class="a" style="left:350.50px;top:494.80px;font-size:12.00px;line-height:14px;color:#333">特定</div>
<div id="r_k_1" class="a" style="left:350.50px;top:532.15px;font-size:12.00px;line-height:14px;color:#333">特定</div>
<div id="r_k_2" class="a" style="left:350.50px;top:569.50px;font-size:12.00px;line-height:14px;color:#333">特定</div>
<div id="r_k_3" class="a" style="left:350.50px;top:606.85px;font-size:12.00px;line-height:14px;color:#333">特定</div>
<div id="r_k_4" class="a" style="left:350.50px;top:644.20px;font-size:12.00px;line-height:14px;color:#333">特定</div>
<div id="r_s" class="a" style="left:413.00px;top:494.80px;font-size:11.00px;line-height:14px;color:#333;transform:scale(1.0273);transform-origin:0 0">一般</div>
<div id="r_s_1" class="a" style="left:413.00px;top:532.15px;font-size:11.00px;line-height:14px;color:#333;transform:scale(1.0273);transform-origin:0 0">一般</div>
<div id="r_s_2" class="a" style="left:413.00px;top:569.50px;font-size:11.00px;line-height:14px;color:#333;transform:scale(1.0273);transform-origin:0 0">一般</div>
<div id="r_s_3" class="a" style="left:413.00px;top:606.85px;font-size:11.00px;line-height:14px;color:#333;transform:scale(1.0273);transform-origin:0 0">一般</div>
<div id="r_s_4" class="a" style="left:413.00px;top:644.20px;font-size:11.00px;line-height:14px;color:#333;transform:scale(1.0273);transform-origin:0 0">一般</div>
<div id="r_t" class="a" style="left:468.40px;top:494.80px;font-size:12.00px;line-height:14px;color:#333">売埋</div>
<div id="r_t_1" class="a" style="left:468.40px;top:532.15px;font-size:12.00px;line-height:14px;color:#333">売埋</div>
<div id="r_t_2" class="a" style="left:468.40px;top:569.50px;font-size:12.00px;line-height:14px;color:#333">売埋</div>
<div id="r_t_3" class="a" style="left:468.40px;top:606.85px;font-size:12.00px;line-height:14px;color:#333">売埋</div>
<div id="r_t_4" class="a" style="left:468.40px;top:644.20px;font-size:12.00px;line-height:14px;color:#333">売埋</div>
<div id="r_q1" class="a" style="right:407.20px;top:487.50px;font-size:12.00px;line-height:14px;color:#333;transform:scale(0.9725);transform-origin:100% 0">100 株</div>
<div id="r_q1_1" class="a" style="right:407.20px;top:524.85px;font-size:12.00px;line-height:14px;color:#333;transform:scale(0.9725);transform-origin:100% 0">100 株</div>
<div id="r_q1_2" class="a" style="right:407.20px;top:562.20px;font-size:12.00px;line-height:14px;color:#333;transform:scale(0.9725);transform-origin:100% 0">100 株</div>
<div id="r_q1_3" class="a" style="right:407.20px;top:599.55px;font-size:12.00px;line-height:14px;color:#333;transform:scale(0.9725);transform-origin:100% 0">100 株</div>
<div id="r_q1_4" class="a" style="right:407.20px;top:636.90px;font-size:12.00px;line-height:14px;color:#333;transform:scale(0.9725);transform-origin:100% 0">100 株</div>
<div id="r_q2" class="a" style="right:407.20px;top:503.60px;font-size:12.00px;line-height:14px;color:#333">2,171.5</div>
<div id="r_q2_1" class="a" style="right:407.20px;top:540.95px;font-size:12.00px;line-height:14px;color:#333">2,171.5</div>
<div id="r_q2_2" class="a" style="right:407.20px;top:578.30px;font-size:12.00px;line-height:14px;color:#333">2,171.5</div>
<div id="r_q2_3" class="a" style="right:407.20px;top:615.65px;font-size:12.00px;line-height:14px;color:#333">2,175.0</div>
<div id="r_q2_4" class="a" style="right:407.20px;top:653.00px;font-size:12.00px;line-height:14px;color:#333">2,170.0</div>
<div id="r_a" class="a" style="right:337.20px;top:494.30px;font-size:12.01px;line-height:14px;color:#333">217,150</div>
<div id="r_a_1" class="a" style="right:337.20px;top:531.65px;font-size:12.01px;line-height:14px;color:#333">217,150</div>
<div id="r_a_2" class="a" style="right:337.20px;top:569.00px;font-size:12.01px;line-height:14px;color:#333">217,150</div>
<div id="r_a_3" class="a" style="right:337.20px;top:606.35px;font-size:12.01px;line-height:14px;color:#333">217,500</div>
<div id="r_a_4" class="a" style="right:337.20px;top:643.70px;font-size:12.01px;line-height:14px;color:#333">217,000</div>
<div id="r_p" class="a" style="right:260.20px;top:495.30px;font-size:12.23px;line-height:14px;color:#333">2,150.00</div>
<div id="r_p_1" class="a" style="right:260.20px;top:532.65px;font-size:12.23px;line-height:14px;color:#333">2,155.00</div>
<div id="r_p_2" class="a" style="right:260.20px;top:570.00px;font-size:12.23px;line-height:14px;color:#333">2,160.60</div>
<div id="r_p_3" class="a" style="right:260.20px;top:607.35px;font-size:12.23px;line-height:14px;color:#333">2,170.00</div>
<div id="r_p_4" class="a" style="right:260.20px;top:644.70px;font-size:12.23px;line-height:14px;color:#333">2,165.00</div>
<div id="r_g" class="a" style="right:195.00px;top:494.30px;font-size:12.00px;line-height:14px;color:#333">2,150</div>
<div id="r_g_1" class="a" style="right:195.00px;top:531.65px;font-size:12.00px;line-height:14px;color:#333">1,650</div>
<div id="r_g_2" class="a" style="right:195.00px;top:569.00px;font-size:12.00px;line-height:14px;color:#333">1,090</div>
<div id="r_g_3" class="a" style="right:195.00px;top:606.35px;font-size:12.00px;line-height:14px;color:#333">500</div>
<div id="r_g_4" class="a" style="right:195.00px;top:643.70px;font-size:12.00px;line-height:14px;color:#333">500</div>
</body></html>
